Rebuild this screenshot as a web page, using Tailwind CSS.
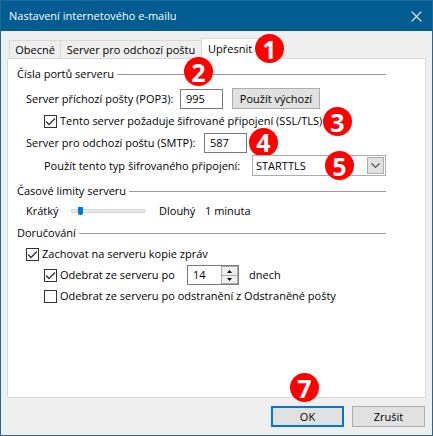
<!DOCTYPE html>
<html lang="cs">
<head>
<meta charset="utf-8">
<title>Nastavení internetového e-mailu</title>
<script src="https://cdn.jsdelivr.net/npm/@tailwindcss/browser@4"></script>
</head>
<body class="min-h-screen bg-[#efefef] font-['Open_Sans','Noto_Sans',sans-serif] text-[11px] leading-[18px] text-black">
<div class="flex min-h-screen flex-col border border-[#1b6a99]">
  <header class="flex h-[30px] shrink-0 items-center justify-between bg-[#005c91] pr-[10px] pl-2 text-white">
    <h1>Nastavení internetového e-mailu</h1>
    <button type="button" aria-label="Zavřít">
      <svg class="size-[11px]" viewBox="0 0 11 11" fill="none" stroke="currentColor" stroke-width="1.1"><path d="M.7 .7 10.3 10.3M10.3 .7 .7 10.3"/></svg>
    </button>
  </header>

  <main class="flex grow flex-col px-[6px] pt-[7px]">
    <div class="flex items-end pl-[2px]" role="tablist">
      <button type="button" role="tab" class="h-[18px] w-[52px] border border-b-0 border-[#d9d9d9] whitespace-nowrap">Obecné</button>
      <button type="button" role="tab" class="h-[18px] w-[140px] border-t border-[#d9d9d9] whitespace-nowrap">Server pro odchozí poštu</button>
      <div class="relative">
        <button type="button" role="tab" aria-selected="true" class="relative -mb-px h-[21px] w-[61px] border border-b-0 border-[#d9d9d9] bg-white pl-[6px] text-left">Upřesnit</button>
        <span class="absolute top-[-4px] left-[54px] z-10 flex size-[29px] items-center justify-center rounded-full bg-[#ff0000] text-[25px] font-bold text-white">1</span>
      </div>
    </div>

    <form id="settings" class="grow border border-[#d9d9d9] bg-white pt-[6px] pr-[39px] pl-[9px]">
      <div class="relative flex h-[18px] items-center gap-[3px]">
        <h2>Čísla portů serveru</h2><div class="h-px grow bg-[#999]"></div>
        <span class="absolute top-[-8px] left-[167px] flex size-[29px] items-center justify-center rounded-full bg-[#ff0000] text-[25px] font-bold text-white">2</span>
      </div>
      <div class="mt-[5px] flex h-[21px] items-center pl-[9px]">
        <label for="pop" class="w-[154px] whitespace-nowrap">Server příchozí pošty (POP3):</label>
        <input id="pop" value="995" class="h-[20px] w-[43px] border border-[#7a7a7a] px-[5px]">
        <button type="button" class="ml-[9px] h-[21px] w-[88px] border border-[#adadad] bg-[#e1e1e1]">Použít výchozí</button>
      </div>
      <div class="mt-[3px] flex h-[18px] items-center gap-[3px] pl-[27px]">
        <span class="relative flex size-[13px]"><input id="ssl" type="checkbox" checked class="peer size-[13px] appearance-none border border-[#333] bg-white"><svg class="pointer-events-none absolute inset-0 hidden size-[13px] peer-checked:block" viewBox="0 0 13 13" fill="none" stroke="#333" stroke-width="1.3"><path d="M2 6.5 5 9.5 11 3.5"/></svg></span>
        <div class="relative"><label for="ssl" class="whitespace-nowrap">Tento server požaduje šifrované připojení (SSL/TLS)</label>
          <span class="absolute top-[-5px] left-[263px] z-10 flex size-[29px] items-center justify-center rounded-full bg-[#ff0000] text-[25px] font-bold text-white">3</span></div>
      </div>
      <div class="mt-[2px] flex h-[21px] items-center pl-[9px]">
        <label for="smtp" class="w-[178px] whitespace-nowrap">Server pro odchozí poštu (SMTP):</label>
        <div class="relative flex"><input id="smtp" value="587" class="h-[20px] w-[43px] border border-[#7a7a7a] px-[5px]">
          <span class="absolute top-[-5px] left-[45px] flex size-[29px] items-center justify-center rounded-full bg-[#ff0000] text-[25px] font-bold text-white">4</span></div>
      </div>
      <div class="mt-[2px] flex h-[21px] items-center pl-[27px]">
        <label for="enc" class="w-[208px] whitespace-nowrap">Použít tento typ šifrovaného připojení:</label>
        <div class="relative flex grow">
          <select id="enc" class="h-[21px] grow appearance-none border border-[#adadad] bg-white pl-[3px] leading-[16px]"><option>STARTTLS</option></select>
          <span class="pointer-events-none absolute top-[2px] right-[2px] flex size-[17px] items-center justify-center border border-[#adadad] bg-[#e1e1e1]"><svg class="h-[5px] w-[9px]" viewBox="0 0 9 5" fill="none" stroke="#444" stroke-width="1.1"><path d="M.5 .5 4.5 4.3 8.5 .5"/></svg></span>
          <span class="absolute top-[-4px] left-[73px] flex size-[29px] items-center justify-center rounded-full bg-[#ff0000] text-[25px] font-bold text-white">5</span>
        </div>
      </div>

      <div class="mt-[6px] flex h-[18px] items-center gap-[3px]"><h2>Časové limity serveru</h2><div class="h-px grow bg-[#999]"></div></div>
      <div class="mt-[2px] flex h-[18px] items-center pl-[9px]">
        <label for="limit" class="w-[45px]">Krátký</label>
        <input id="limit" type="range" min="0" max="100" value="9" class="h-[8px] w-[74px] appearance-none bg-transparent [&::-webkit-slider-runnable-track]:h-[4px] [&::-webkit-slider-runnable-track]:border [&::-webkit-slider-runnable-track]:border-[#d6d6d6] [&::-webkit-slider-runnable-track]:bg-[#e7eaea] [&::-webkit-slider-thumb]:-mt-[3px] [&::-webkit-slider-thumb]:h-[8px] [&::-webkit-slider-thumb]:w-[5px] [&::-webkit-slider-thumb]:appearance-none [&::-webkit-slider-thumb]:rounded-b-[2px] [&::-webkit-slider-thumb]:bg-[#0078d7]">
        <span class="ml-[14px] w-[46px]">Dlouhý</span><output for="limit">1 minuta</output>
      </div>

      <div class="mt-[4px] flex h-[18px] items-center gap-[3px]"><h2>Doručování</h2><div class="h-px grow bg-[#999]"></div></div>
      <div class="mt-[3px] flex h-[18px] items-center gap-[3px] pl-[9px]">
        <span class="relative flex size-[13px]"><input id="keep" type="checkbox" checked class="peer size-[13px] appearance-none border border-[#333] bg-white"><svg class="pointer-events-none absolute inset-0 hidden size-[13px] peer-checked:block" viewBox="0 0 13 13" fill="none" stroke="#333" stroke-width="1.3"><path d="M2 6.5 5 9.5 11 3.5"/></svg></span>
        <label for="keep">Zachovat na serveru kopie zpráv</label>
      </div>
      <div class="mt-[2px] flex h-[20px] items-center gap-[3px] pl-[27px]">
        <span class="relative flex size-[13px]"><input id="rem" type="checkbox" checked class="peer size-[13px] appearance-none border border-[#333] bg-white"><svg class="pointer-events-none absolute inset-0 hidden size-[13px] peer-checked:block" viewBox="0 0 13 13" fill="none" stroke="#333" stroke-width="1.3"><path d="M2 6.5 5 9.5 11 3.5"/></svg></span>
        <label for="rem" class="w-[124px]">Odebrat ze serveru po</label>
        <div class="flex h-[20px] w-[52px] border border-[#7a7a7a]">
          <input id="days" aria-label="Počet dnů" value="14" class="w-0 grow pl-[5px]">
          <div class="flex w-[17px] flex-col border border-[#adadad] bg-[#adadad]">
            <button type="button" aria-label="Více" class="flex h-[8px] items-center justify-center bg-[#efefef]"><svg class="h-[3px] w-[5px]" viewBox="0 0 5 3"><path d="M0 3 2.5 0 5 3z"/></svg></button>
            <button type="button" aria-label="Méně" class="mt-px flex grow items-center justify-center bg-[#efefef]"><svg class="h-[3px] w-[5px]" viewBox="0 0 5 3"><path d="M0 0 2.5 3 5 0z"/></svg></button>
          </div>
        </div>
        <label for="days" class="ml-[7px]">dnech</label>
      </div>
      <div class="mt-[2px] flex h-[18px] items-center gap-[3px] pl-[27px]">
        <input id="del" type="checkbox" class="size-[13px] appearance-none border border-[#333] bg-white">
        <label for="del" class="whitespace-nowrap">Odebrat ze serveru po odstranění z Odstraněné pošty</label>
      </div>
    </form>
  </main>

  <footer class="flex shrink-0 justify-end gap-2 px-[7px] pt-2 pb-2">
    <div class="relative flex">
      <button type="submit" form="settings" class="h-[21px] w-[73px] border-2 border-[#0078d7] bg-[#e1e1e1] leading-[17px]">OK</button>
      <span class="absolute top-[-33px] left-[19px] flex size-[29px] items-center justify-center rounded-full bg-[#ff0000] text-[25px] font-bold text-white">7</span>
    </div>
    <button type="button" class="h-[21px] w-[73px] border border-[#adadad] bg-[#e1e1e1]">Zrušit</button>
  </footer>
</div>
</body>
</html>
